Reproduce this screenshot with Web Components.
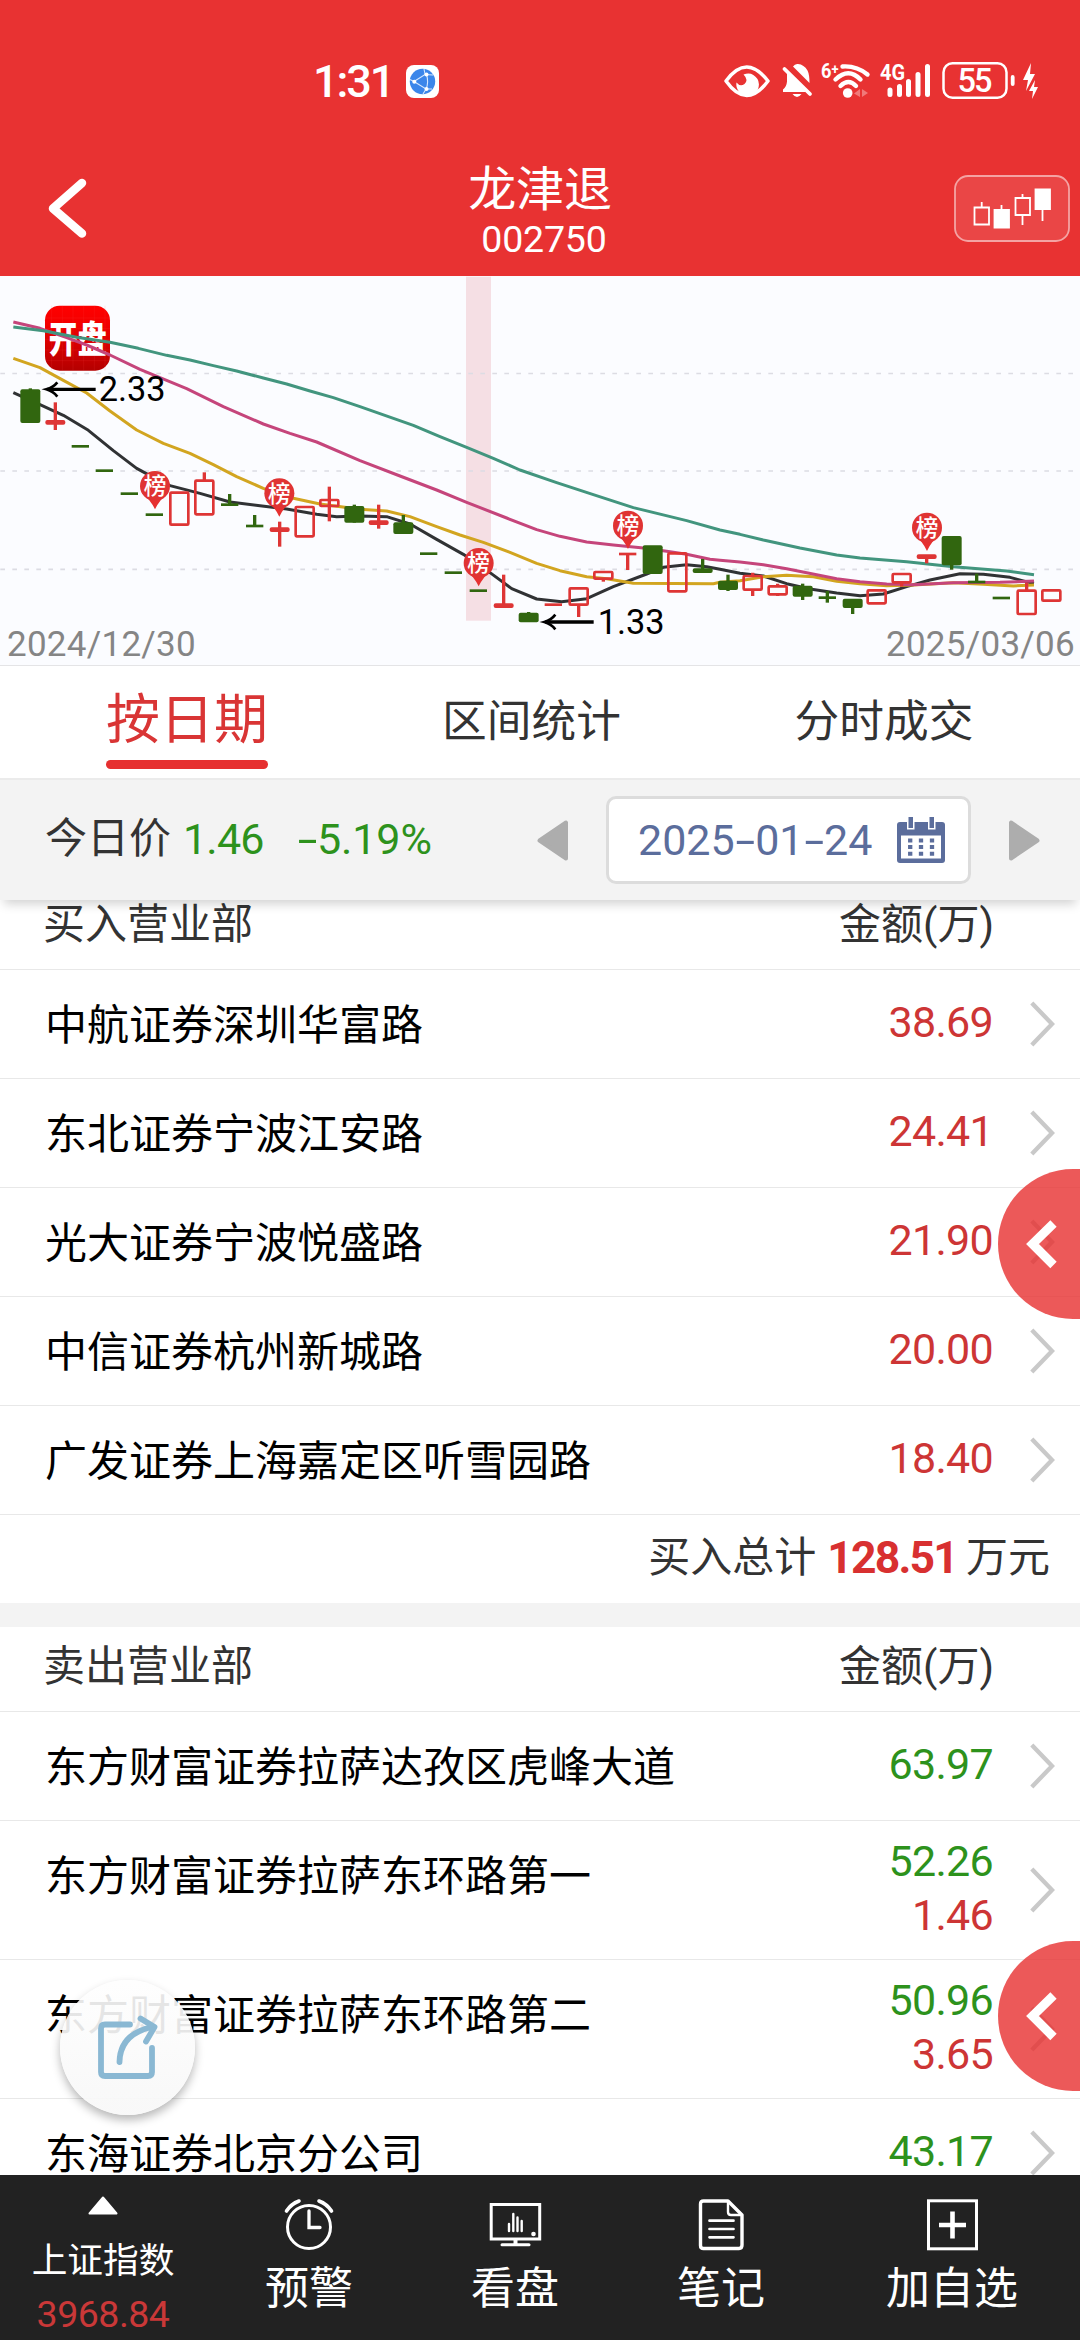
<!DOCTYPE html>
<html lang="zh-CN">
<head>
<meta charset="utf-8">
<title>龙津退 002750</title>
<style>
html,body{margin:0;padding:0;background:#fff}
body{font-family:Roboto,"Noto Sans CJK SC",sans-serif;width:1080px;height:2340px;overflow:hidden}
</style>
</head>
<body>
<stock-app></stock-app>
<script>
const define = (name, html, setup) => customElements.define(name, class extends HTMLElement {
  constructor() {
    super();
    const t = document.createElement('template');
    t.innerHTML = html;
    this.attachShadow({mode: 'open'}).append(t.content.cloneNode(true));
  }
  connectedCallback() { if (setup) setup(this, this.shadowRoot); }
});

/* ---------- status bar ---------- */
define('status-bar', `
<style>
:host{display:flex;height:162px;color:#fff;align-items:center;box-sizing:border-box;padding-left:313px}
.time{font-size:45px;font-weight:500;line-height:48px;letter-spacing:-2.100px;width:93px;white-space:nowrap;padding-top:1px}
svg{display:block;flex:none}
.right{margin-left:285px}
</style>
<span class="time">1:31</span>
<svg width="33" height="33" viewBox="0 0 33 33"><rect width="33" height="33" rx="8" fill="#fff"/><circle cx="16.500" cy="16.500" r="12.700" fill="#3b86ea"/><path d="M8 16.500 19 9.500 27 10M8 16.500l12 7.500h6M8 16.500l-4-2M20.500 9.500 Q23 17 20 24.500M19 9l-1-5M20 24l-3 5" fill="none" stroke="#d6e8ff" stroke-width="1.100"/><circle cx="8.300" cy="16.700" r="2" fill="#fff"/><circle cx="20.500" cy="9.500" r="2" fill="#fff"/><circle cx="20.500" cy="24" r="2" fill="#fff"/></svg>
<svg class="right" width="320" height="44" viewBox="724 59 320 44" fill="none" stroke="#fff">
  <path d="M726 81Q746.500 53 768 81Q746.500 110 726 81Z" stroke-width="3.500" stroke-linejoin="round"/>
  <path d="M743.500 74.500Q752 71 757.500 79A11.300 11.300 0 1 1 736.500 82.500Q740 87 744.500 84Q749 80 743.500 74.500Z" fill="#fff" stroke="none"/>
  <path d="M793 66.500q2-3 5-2.500 6 .5 9.500 6.500 2 4 2 12.500ZM787 73l19 19h-23l0-2.500q3.500-2.500 4-8ZM792.500 94h9q-4.500 6-9 0Z" fill="#fff" stroke="none"/>
  <path d="M784.500 69l25.500 25" stroke-width="3.800" stroke-linecap="round"/>
  <path d="M842.500 66.500q14-1 25 8" stroke-width="4.400" stroke-linecap="round"/>
  <path d="M835.500 79.500q13-12.500 25 0M840.500 86q8-8 15.500 0" stroke-width="4.400" stroke-linecap="round"/>
  <circle cx="847.700" cy="93" r="4.800" fill="#fff" stroke="none"/>
  <path d="M860 89v8l-6-3.500ZM862 89v8l6-4Z" fill="#fff" fill-opacity=".35" stroke="none"/>
  <path d="M890 90v4.500M899.500 86.500v8M908.500 81.500v13M918 74.500v20M927.500 66.500v28" stroke-width="5" stroke-linecap="round"/>
  <rect x="943.500" y="63.200" width="63" height="34.500" rx="9" stroke-width="2.500"/>
  <path d="M1012.700 77v7" stroke-width="3.800" stroke-linecap="round"/>
  <path d="M1031 63l-8 17h5l-2 11 9-17h-5ZM1035 80l-6 11h4l-1 8 6-12h-4Z" fill="#fff" stroke="none"/>
  <g fill="#fff" stroke="none" font-family="Roboto"><text x="821" y="78" font-size="21" font-weight="700" textLength="17.500" lengthAdjust="spacingAndGlyphs">6<tspan dy="-4" font-size="15">+</tspan></text><text x="880" y="80" font-size="22" font-weight="700" textLength="25" lengthAdjust="spacingAndGlyphs">4G</text><text x="975" y="92" font-size="32.500" font-weight="500" text-anchor="middle" textLength="35">55</text></g>
</svg>`);

/* ---------- title bar ---------- */
define('title-bar', `
<style>
:host{display:flex;height:114px;color:#fff;box-sizing:border-box;padding:0 10px 0 48px;justify-content:space-between;align-items:flex-start}
svg{display:block}
.back{margin-top:16px}
.t{display:flex;flex-direction:column;align-items:center;margin-left:39px;padding-top:1px}
b{font-weight:400;font-size:48px;line-height:54px;letter-spacing:-.2px}
i{font-style:normal;font-size:37.500px;line-height:44px;padding-left:8px;letter-spacing:-.2px}
.k{margin-top:13px}
</style>
<svg class="back" width="39" height="61" viewBox="0 0 39 61"><path d="M34 5 5 30.500 34 55.500" fill="none" stroke="#fff" stroke-width="8.500" stroke-linecap="round" stroke-linejoin="round"/></svg>
<div class="t"><b><slot></slot></b><i><slot name="code"></slot></i></div>
<svg class="k" width="116" height="67" viewBox="954.500 175 116 67"><rect x="955.500" y="176" width="114" height="65" rx="13" fill="#fff" fill-opacity=".1" stroke="#f4a3a3" stroke-width="1.800"/>
<g fill="none" stroke="#fff" stroke-width="1.800"><path d="M975 207.500h14.500v17H975ZM982.200 207v-5M1002 210v-5M1016 198h14.500v17H1016ZM1023 198v-4M1023 215v10M1043 208v13"/><path fill="#fff" d="M995 210h14.500v17.500H995ZM1036 189.500h14.500v19.500H1036Z"/></g></svg>`);

/* ---------- candlestick chart; drawing units are thirds of a pixel ---------- */
const CANDLES = [
 /* kind, centre x, open/close y, wick y */
 ['f',91,358,459,355,459],['R',166,457,0,397,480],['g',241,529],['g',313,602],['g',388,671],['g',463,734],
 ['h',538,668,764],['h',613,632,733,607,632],['g',689,704,0,672,704],['g',764,768,0,735,768],['R',839,779,0,755,830],
 ['h',914,711,799],['h',988,690,708,650,754],['f',1063,708,758,704,758],['R',1136,758,0,704,776],['f',1210,757,792,735,760],
 ['g',1286,851],['g',1360,908],['g',1435,962],['R',1511,1007,0,914,1012],['f',1586,1028,1057,1026,1050],['r',1660,1004],
 ['h',1736,955,1004,1004,1041],['h',1810,906,926,926,935],['r',1883,852,0,852,900],['f',1958,826,912],['h',2032,850,964],
 ['G',2108,902,0,867,902],['f',2184,932,960,914,963],['h',2258,918,959,908,978,1],['h',2333,949,973,941,978,1],['f',2408,947,980,941,990],
 ['g',2482,983,0,963,998],['f',2558,986,1014,1000,1032],['h',2630,961,1000],['h',2705,912,937,937,950],['R',2780,860,0,860,880],
 ['f',2855,798,886,880,899],['g',2930,936,0,911,936],['g',3004,984],['h',3080,962,1032,938,962],['h',3154,961,992,957,961]
];
const LINES = [
 ['#303234','40,368 120,404 190,436 265,481 340,542 410,595 460,622 510,647 600,670 690,696 780,707 860,717 950,733 1010,740 1080,738 1160,740 1230,762 1310,808 1390,853 1470,908 1535,956 1610,987 1685,995 1760,986 1840,950 1940,912 1990,892 2060,884 2120,890 2160,898 2220,910 2290,918 2360,941 2430,957 2510,969 2580,977 2650,972 2720,950 2790,930 2880,911 2950,913 3030,922 3090,938 3102,940'],
 ['#d2a520','40,265 120,293 190,331 260,369 330,423 410,480 490,520 570,550 640,584 710,620 790,655 880,685 960,702 1080,718 1160,723 1230,740 1310,770 1380,795 1450,817 1530,847 1610,880 1680,902 1760,920 1820,926 1900,940 2140,941 2160,937 2220,932 2290,920 2360,916 2440,920 2510,934 2580,941 2660,947 2740,945 2860,938 2950,943 3040,948 3102,945'],
 ['#c5457b','40,156 120,175 200,203 260,225 330,255 420,298 560,356 670,410 790,462 870,490 950,516 1080,572 1200,618 1310,660 1400,697 1520,744 1610,779 1680,799 1760,816 1840,825 1930,834 2000,844 2060,853 2130,868 2160,871 2220,876 2290,884 2360,896 2450,914 2510,926 2580,935 2660,942 2740,944 2860,938 3000,937 3102,933'],
 ['#42957e','40,171 130,182 230,202 330,217 415,235 500,256 570,270 640,287 710,303 790,324 860,342 930,363 1000,383 1080,410 1240,466 1320,500 1400,532 1480,565 1560,600 1670,638 1780,674 1900,713 2060,752 2160,780 2220,793 2290,810 2400,834 2510,855 2580,864 2720,875 2860,890 3020,903 3102,914']
];
const PINS = [[465,648],[838,670],[1436,879],[1884,767],[2781,773]];
define('kline-chart', `
<style>:host{display:block;height:389px;background:#fbfcff;border-bottom:1px solid #e4e4e6}svg{display:block}text{font-family:Roboto,"Noto Sans CJK SC",sans-serif}</style>
<svg width="1080" height="389" viewBox="0 18 3240 1167">
<defs><linearGradient id="lg" x1="0" y1="0" x2="0" y2="1"><stop offset="0" stop-color="#ff0000"/><stop offset=".25" stop-color="#f50000"/><stop offset="1" stop-color="#b40000"/></linearGradient></defs>
<rect x="1398" y="20" width="75" height="1032" fill="#f5dfe4"/>
<path d="M1 310.500H3222M1 603H3222M1 898H3222" stroke="#dcdce3" stroke-width="5" stroke-dasharray="14 22"/>
<rect x="135" y="107" width="195" height="195" rx="44" fill="url(#lg)"/>
<path d="M155 107v195M187 107v195M219 107v195M251 107v195M283 107v195M315 107v195M135 144h195M135 176h195M135 208h195M135 240h195M135 272h195" stroke="#ff5050" stroke-opacity=".2" stroke-width="2"/>
<text x="146" y="249" font-size="90" font-weight="900" fill="#fff" textLength="174" lengthAdjust="spacingAndGlyphs" transform="translate(0 -61) scale(1 1.240)">开盘</text>
<g id="lines" fill="none" stroke-width="9" stroke-linejoin="round"></g><g id="candles"></g><g id="pins"></g>
<g fill="none" stroke="#000" stroke-width="8"><path d="M287 358H142M1781 1056H1636" stroke-width="10"/><path d="M172 337Q160 352 139 358Q160 364 172 380"/><path d="M1666 1034Q1654 1050 1633 1056Q1654 1062 1666 1078"/></g>
<g font-size="103"><text x="296" y="393" textLength="201">2.33</text><text x="1793" y="1091" textLength="201">1.33</text></g>
<g font-size="105" fill="#858585"><text x="21" y="1157" textLength="566">2024/12/30</text><text x="2658" y="1157" textLength="566">2025/03/06</text></g>
</svg>`, (el, root) => {
  const R = '#de3535', G = '#31660f';
  let back = '', front = '';
  for (const [k, x, a, b, w1, w2, through] of CANDLES) {
    const col = 'fgG'.includes(k) ? G : R;
    let s = w1 ? `<path d="M${x} ${w1}V${w2}" stroke="${col}" stroke-width="10"/>` : '';
    if (k === 'f') s += `<rect x="${x-30}" y="${a}" width="60" height="${b-a}" rx="6" fill="${G}"/>`;
    else if (k === 'h') {
      if (through) s = `<path d="M${x} ${w1}V${a}M${x} ${b}V${w2}" stroke="${R}" stroke-width="10"/>`;
      s += `<rect x="${x-27}" y="${a}" width="54" height="${b-a}" rx="3" fill="none" stroke="${R}" stroke-width="8"/>`;
    }
    else if (k === 'R' || k === 'G') s += `<rect x="${x-30}" y="${a-7}" width="60" height="14" rx="6" fill="${col}"/>`;
    else s += `<rect x="${x-26}" y="${a-4}" width="52" height="8" fill="${col}"/>`;
    if (k === 'h') front += s; else back += s;
  }
  const $ = id => root.getElementById(id);
  $('lines').innerHTML = LINES.map(([c, p]) => `<polyline stroke="${c}" points="${p}"/>`).join('');
  $('candles').innerHTML = back + front;
  $('pins').innerHTML = PINS.map(([x, y]) => `<path d="M${x-40} ${y+20}Q${x-14} ${y+40} ${x} ${y+70}Q${x+14} ${y+40} ${x+40} ${y+20}Z" fill="#e63030"/><circle cx="${x}" cy="${y}" r="45" fill="#e03333"/><text x="${x}" y="${y+25}" font-size="68" font-weight="500" fill="#fff" text-anchor="middle">榜</text>`).join('');
});

/* ---------- tabs ---------- */
define('mode-tab', `
<style>
:host{display:flex;flex-direction:column;align-items:center;font-size:44.700px;color:#333;line-height:64px;padding-top:24px;box-sizing:border-box;white-space:nowrap}
:host([active]){font-size:54px;color:#d93535;padding-top:23px}
:host([active])::after{content:"";width:162px;height:9px;border-radius:5px;background:#e63030;margin-top:7px}
</style><slot></slot>`);
define('mode-tabs', `
<style>:host{display:grid;grid-template-columns:374px 315px 390px;height:112px;background:#fff}</style><slot></slot>`);

/* ---------- price and date bar ---------- */
define('price-bar', `
<style>
:host{display:flex;align-items:center;height:122px;box-sizing:border-box;border-top:2px solid #ebebeb;background:#f3f3f3;box-shadow:0 8px 10px -4px rgba(0,0,0,.18);position:relative;z-index:2;padding-left:45px;font-size:42px;color:#333}
svg{display:block;flex:none}
.g{color:#2d921c;font-size:43px;line-height:50px;padding-bottom:3px;letter-spacing:-.8px}
.p{width:125px;padding-left:10px;box-sizing:border-box;flex:none}
.c{width:239px;flex:none;letter-spacing:-.1px}
.box{margin:0 38px;display:flex;align-items:center;box-sizing:border-box;width:365px;height:88px;flex:none;border:3px solid #dcdcdc;border-radius:10px;background:#fff;color:#5b6d9c;font-size:43px;padding-left:29px}
.d{display:flex;width:259px;line-height:50px}
u,s{text-decoration:none;display:block;width:20.500px;text-align:center;transform:scaleX(1.650)}
s{display:inline-block;width:19px}
.lbl{width:128px;line-height:50px;padding-bottom:2px;flex:none}
</style>
<span class="lbl">今日价</span><span class="g p">1.46</span><span class="g c"><s>-</s>5.19%</span>
<svg width="31" height="41" viewBox="0 0 31 41"><path d="M29 2.500V38.500L2.500 20.500Z" fill="#adadad" stroke="#adadad" stroke-width="4" stroke-linejoin="round"/></svg>
<div class="box"><span class="d">2025<u>-</u>01<u>-</u>24</span>
<svg width="48" height="46" viewBox="0 0 48 46"><path fill="#5b6d9c" d="M3 5H45Q48 5 48 8V43Q48 46 45 46H3Q0 46 0 43V8Q0 5 3 5Z"/><path fill="#fff" d="M4 18.500H44V41.500H4ZM10 4h7.500v8.500H10ZM31 4h7.500v8.500H31Z"/><path fill="#5b6d9c" d="M11.500 0h4.500v11h-4.500ZM32.500 0H37v11h-4.500Z"/><path d="M13.200 21.500v17.500M24 21.500v17.500M35 21.500v17.500" stroke="#5b6d9c" stroke-width="4.300" stroke-dasharray="4 2.600"/></svg></div>
<svg width="31" height="41" viewBox="0 0 31 41"><path d="M2 2.500V38.500L28.500 20.500Z" fill="#adadad" stroke="#adadad" stroke-width="4" stroke-linejoin="round"/></svg>`);

/* ---------- broker list ---------- */
define('list-head', `
<style>:host{display:flex;justify-content:space-between;height:85px;box-sizing:border-box;border-bottom:1px solid #e8e8e8;padding:15px 86px 0 43px;font-size:42px;line-height:50px;color:#333}</style>
<span><slot></slot></span><span>金额(万)</span>`);
define('broker-row', `
<style>
:host{display:flex;align-items:center;border-bottom:1px solid #e8e8e8;min-height:108px;font-size:42px;color:#000;padding:0 25px 0 45px}
.n{flex:1;align-self:flex-start;line-height:54px;padding-top:29px}
.v{display:flex;flex-direction:column;align-items:flex-end;font-size:43px;letter-spacing:-.7px;line-height:54px;padding:0 37px 4px 0;min-height:0}
:host([tall]) .v{padding:13px 37px 17px 0}
::slotted([slot=buy]){color:#cd3535}
::slotted([slot=sell]){color:#2d921c}
svg{display:block}
</style>
<span class="n"><slot></slot></span>
<div class="v"><slot name="sell"></slot><slot name="buy"></slot></div>
<svg width="25" height="46" viewBox="0 0 25 46"><path d="M1.800 2 22 23 1.800 44" fill="none" stroke="#c9c9c9" stroke-width="4.300"/></svg>`);
define('total-row', `
<style>
:host{display:flex;justify-content:flex-end;align-items:center;height:88px;border-bottom:24px solid #f3f3f3;font-size:42px;color:#333;padding-right:30px}
span{line-height:50px;padding-bottom:2px}
b{font-size:44.500px;letter-spacing:-1.800px;color:#d83030;margin:0 9px 0 11px;line-height:50px;padding-bottom:3px}
</style><span>买入总计</span><b><slot></slot></b><span>万元</span>`);

/* ---------- floating controls ---------- */
define('edge-handle', `
<style>:host{position:absolute;right:0;width:82px;height:150px;overflow:hidden}svg{display:block}</style>
<svg width="82" height="150" viewBox="0 0 82 150"><path d="M82 0H75A75 75 0 0 0 75 150H82Z" fill="#e72f2f" fill-opacity=".8"/><path d="M55.500 54.500 34.500 75 55.500 96" fill="none" stroke="#fff" stroke-width="9"/></svg>`);
define('share-button', `
<style>:host{position:absolute;left:60px;top:1980px;width:135px;height:135px;border-radius:50%;background:linear-gradient(rgba(254,254,254,.9),rgba(248,248,248,.92) 90%);box-shadow:0 5px 10px rgba(0,0,0,.28)}svg{display:block}</style>
<svg width="135" height="135" viewBox="60 1980 135 135" fill="none" stroke="#8ab8d3" stroke-width="5.800" stroke-linecap="round"><path d="M130 2024.500H105Q101 2024.500 101 2028.500V2072Q101 2076 105 2076H148Q152 2076 152 2072V2048"/><path d="M119.500 2062Q120 2034 152 2027"/><path d="M140.500 2018.500 154.500 2027 146 2041.500" stroke-linejoin="round"/></svg>`);

/* ---------- bottom navigation ---------- */
define('index-quote', `
<style>
:host{display:flex;flex-direction:column;align-items:center;width:206px;padding-top:21px;box-sizing:border-box;color:#fff}
svg{display:block}
b{font-weight:400;font-size:35.700px;line-height:44px;margin-top:24px}
i{font-style:normal;font-size:37.500px;letter-spacing:-.5px;line-height:44px;margin-top:9px;color:#ca3838}
</style>
<svg width="30" height="19" viewBox="0 0 30 19"><path d="M15 1.500 28.500 17.500H1.500Z" fill="#fff" stroke="#fff" stroke-width="2" stroke-linejoin="round"/></svg>
<b>上证指数</b><i>3968.84</i>`);
const NAV = {
 clock: '<circle cx="25" cy="28" r="21.500" stroke-width="3"/><path d="M25 12v16.500h11" stroke-width="3.300" stroke-linecap="round"/><path d="M2.500 12Q7 5 15 2M47.500 12Q43 5 35 2" stroke-width="3.600" stroke-linecap="round"/>',
 screen: '<rect x="1.200" y="5.500" width="48.500" height="34.500" stroke-width="3"/><path d="M12 45.700h27" stroke-width="3" stroke-linecap="round"/><path d="M25.500 40v5" stroke-width="4"/><path d="M19 25v7M23.300 15v17M27.500 18.500v13.500M31.700 22v10" stroke-width="2.400" stroke-linecap="round"/><circle cx="43.500" cy="35" r="2.300" fill="#fff" stroke="none"/>',
 note: '<path d="M7.500 2H32L46 16V46Q46 49.500 43 49.500H7.500Q4.500 49.500 4.500 46.500V5Q4.500 2 7.500 2Z" stroke-width="3.400" stroke-linejoin="round"/><path d="M32 3V13Q32 16 35 16H45" stroke-width="2.400"/><path d="M13.500 21.700h24M13.500 30h24M13.500 38.300h24" stroke-width="2.700" stroke-linecap="round"/>',
 plus: '<rect x="1.500" y="1.800" width="48" height="48" stroke-width="3"/><path d="M12 26h27M25.500 12.500v27" stroke-width="4.600"/>'
};
define('nav-item', `
<style>
:host{display:flex;flex-direction:column;align-items:center;width:206px;padding-top:24px;box-sizing:border-box;color:#fff;font-size:44px;line-height:50px}
:host([wide]){width:256px}
svg{display:block;margin-bottom:13px;overflow:visible}
</style><svg width="51" height="52" viewBox="0 0 51 52" fill="none" stroke="#fff"></svg><span><slot></slot></span>`,
(el, root) => { root.querySelector('svg').innerHTML = NAV[el.getAttribute('icon')]; });
define('bottom-nav', `<style>:host{display:flex;height:165px;background:#222}</style><slot></slot>`);

/* ---------- page ---------- */
define('stock-app', `
<style>
:host{display:flex;flex-direction:column;position:relative;width:1080px;height:2340px;overflow:hidden;background:#fff}
header{background:#e83232;height:276px}
main{flex:1;min-height:0;overflow:hidden}
.shift{margin-top:-15px}
</style>
<header><status-bar></status-bar><title-bar>龙津退<span slot="code">002750</span></title-bar></header>
<kline-chart></kline-chart>
<mode-tabs><mode-tab active>按日期</mode-tab><mode-tab>区间统计</mode-tab><mode-tab>分时成交</mode-tab></mode-tabs>
<price-bar></price-bar>
<main><div class="shift">
<list-head>买入营业部</list-head>
<broker-row>中航证券深圳华富路<span slot="buy">38.69</span></broker-row>
<broker-row>东北证券宁波江安路<span slot="buy">24.41</span></broker-row>
<broker-row>光大证券宁波悦盛路<span slot="buy">21.90</span></broker-row>
<broker-row>中信证券杭州新城路<span slot="buy">20.00</span></broker-row>
<broker-row>广发证券上海嘉定区听雪园路<span slot="buy">18.40</span></broker-row>
<total-row>128.51</total-row>
<list-head>卖出营业部</list-head>
<broker-row>东方财富证券拉萨达孜区虎峰大道<span slot="sell">63.97</span></broker-row>
<broker-row tall>东方财富证券拉萨东环路第一<span slot="sell">52.26</span><span slot="buy">1.46</span></broker-row>
<broker-row tall>东方财富证券拉萨东环路第二<span slot="sell">50.96</span><span slot="buy">3.65</span></broker-row>
<broker-row>东海证券北京分公司<span slot="sell">43.17</span></broker-row>
</div></main>
<bottom-nav><index-quote></index-quote><nav-item icon="clock">预警</nav-item><nav-item icon="screen">看盘</nav-item><nav-item icon="note">笔记</nav-item><nav-item icon="plus" wide>加自选</nav-item></bottom-nav>
<edge-handle style="top:1169px"></edge-handle>
<edge-handle style="top:1941px"></edge-handle>
<share-button></share-button>`);
</script>
</body>
</html>
